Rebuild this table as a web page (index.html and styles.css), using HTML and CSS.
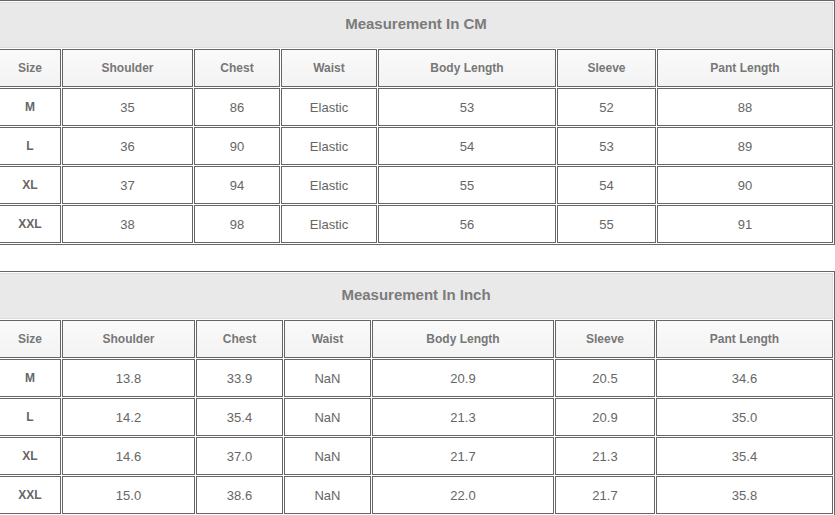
FILE: index.html
```html
<!DOCTYPE html>
<html>
<head>
<meta charset="utf-8">
<link rel="stylesheet" href="styles.css">
</head>
<body>
<div class="page">
<table class="sz cm">
  <tr><td class="title" colspan="7">Measurement In CM</td></tr>
  <tr class="head">
    <th class="c1">Size</th><th class="c2">Shoulder</th><th class="c3">Chest</th><th class="c4">Waist</th><th class="c5">Body Length</th><th class="c6">Sleeve</th><th class="c7">Pant Length</th>
  </tr>
  <tr><td class="size">M</td><td>35</td><td>86</td><td>Elastic</td><td>53</td><td>52</td><td>88</td></tr>
  <tr><td class="size">L</td><td>36</td><td>90</td><td>Elastic</td><td>54</td><td>53</td><td>89</td></tr>
  <tr><td class="size">XL</td><td>37</td><td>94</td><td>Elastic</td><td>55</td><td>54</td><td>90</td></tr>
  <tr><td class="size">XXL</td><td>38</td><td>98</td><td>Elastic</td><td>56</td><td>55</td><td>91</td></tr>
</table>
<table class="sz inch">
  <tr><td class="title" colspan="7">Measurement In Inch</td></tr>
  <tr class="head">
    <th class="c1">Size</th><th class="c2">Shoulder</th><th class="c3">Chest</th><th class="c4">Waist</th><th class="c5">Body Length</th><th class="c6">Sleeve</th><th class="c7">Pant Length</th>
  </tr>
  <tr><td class="size">M</td><td>13.8</td><td>33.9</td><td>NaN</td><td>20.9</td><td>20.5</td><td>34.6</td></tr>
  <tr><td class="size">L</td><td>14.2</td><td>35.4</td><td>NaN</td><td>21.3</td><td>20.9</td><td>35.0</td></tr>
  <tr><td class="size">XL</td><td>14.6</td><td>37.0</td><td>NaN</td><td>21.7</td><td>21.3</td><td>35.4</td></tr>
  <tr><td class="size">XXL</td><td>15.0</td><td>38.6</td><td>NaN</td><td>22.0</td><td>21.7</td><td>35.8</td></tr>
</table>
</div>
</body>
</html>
```
FILE: styles.css
```css
html, body {
  margin: 0;
  padding: 0;
  background: #ffffff;
  overflow: hidden;
}
.page {
  width: 835px;
  height: 515px;
  overflow: hidden;
}
.sz {
  border-collapse: separate;
  border-spacing: 1px;
  border: 1px solid #666666;
  width: 838px;
  margin-left: -3px;
  table-layout: auto;
  font-family: "Liberation Sans", Arial, sans-serif;
  color: #666666;
}
.inch {
  margin-top: 26px;
}
.sz td, .sz th {
  box-sizing: border-box;
  border: 1px solid #666666;
  padding: 0;
  text-align: center;
  vertical-align: middle;
  height: 38px;
  font-size: 13px;
  font-weight: normal;
  background: #ffffff;
}
.sz td.title {
  height: 46px;
  background: #e9e9e9;
  border: 1px solid #dcdcdc;
  font-size: 15px;
  font-weight: bold;
  color: #7b7b7b;
  padding-bottom: 3px;
}
.sz th {
  background: linear-gradient(#fafafa, #f3f3f3);
  font-size: 12px;
  font-weight: bold;
  color: #777777;
}
.sz td.size {
  font-size: 12px;
  font-weight: bold;
  color: #666666;
}
.sz .c1 { width: 62px; }
.cm .c2 { width: 131px; }
.cm .c3 { width: 86px; }
.cm .c4 { width: 96px; }
.cm .c5 { width: 178px; }
.cm .c6 { width: 99px; }
.cm .c7 { width: 176px; }
.inch .c2 { width: 133px; }
.inch .c3 { width: 87px; }
.inch .c4 { width: 87px; }
.inch .c5 { width: 182px; }
.inch .c6 { width: 100px; }
.inch .c7 { width: 177px; }
```
